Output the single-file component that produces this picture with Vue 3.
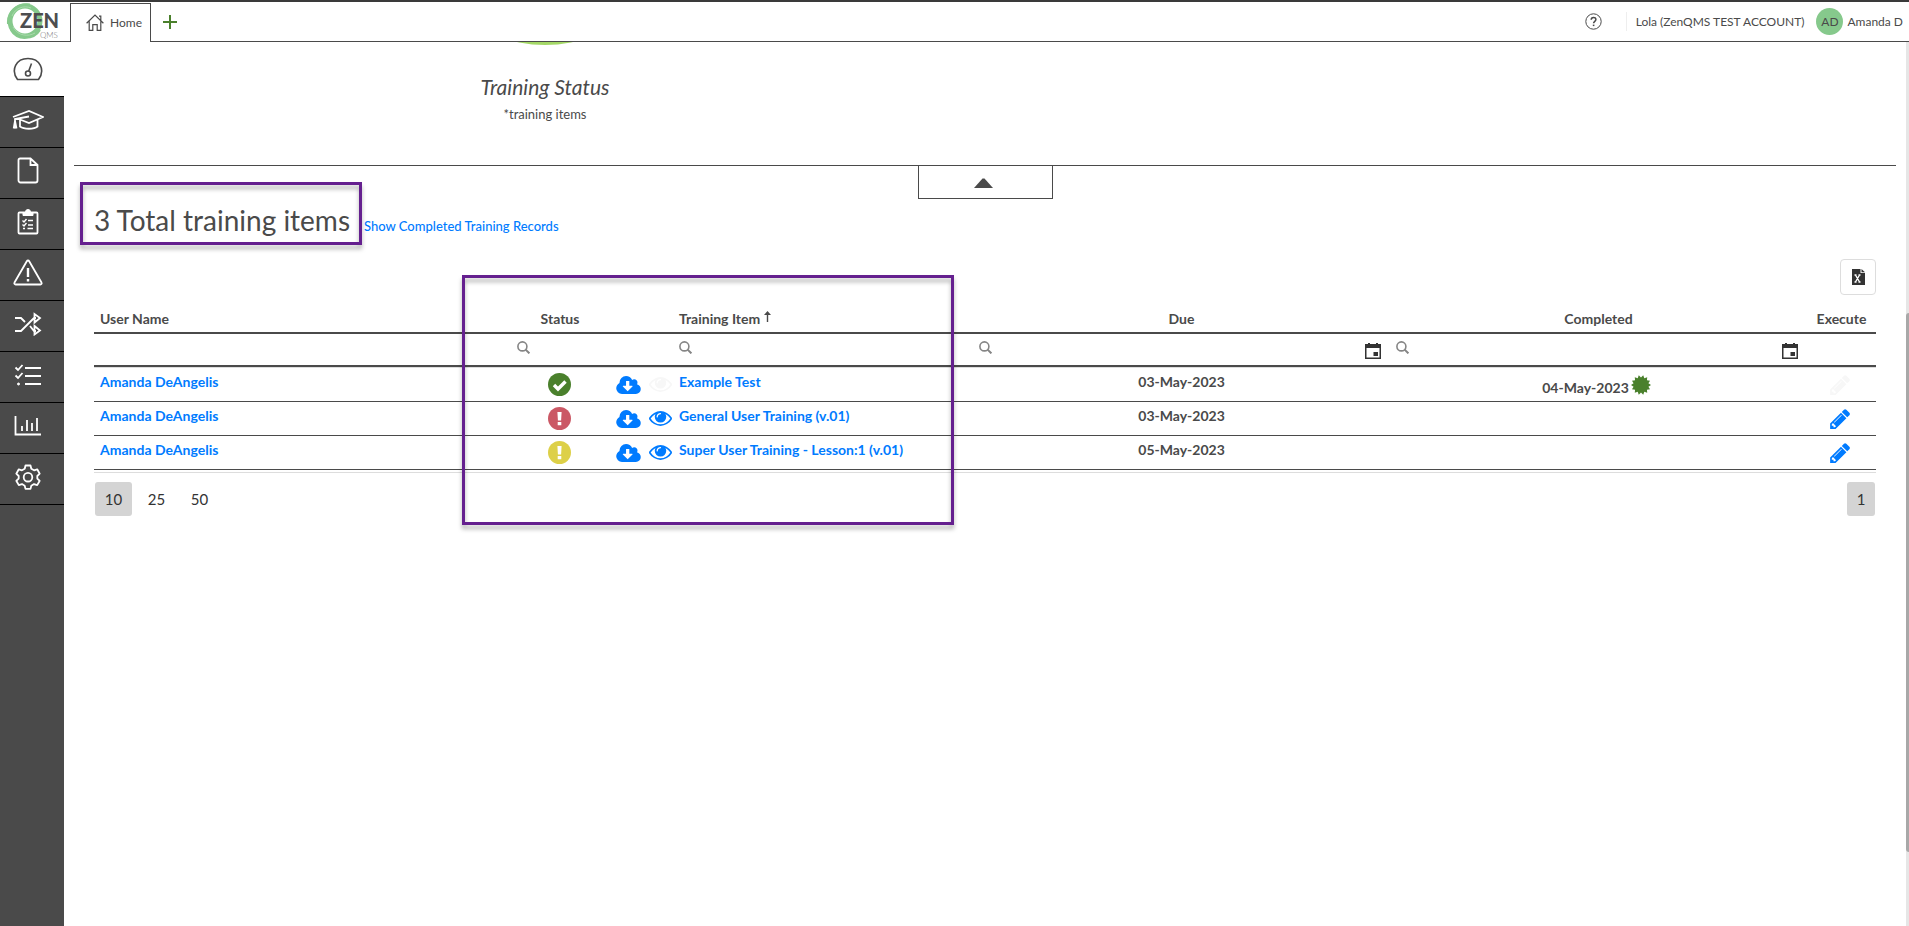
<script setup>
import { ref } from 'vue'

const nav = [
  { id: 'dashboard', label: 'Dashboard' },
  { id: 'training', label: 'Training' },
  { id: 'documents', label: 'Documents' },
  { id: 'audits', label: 'Audits' },
  { id: 'issues', label: 'Issues' },
  { id: 'changes', label: 'Change control' },
  { id: 'tasks', label: 'Tasks' },
  { id: 'reports', label: 'Reports' },
  { id: 'settings', label: 'Settings' },
]
const active = ref('dashboard')

const rows = [
  { user: 'Amanda DeAngelis', status: 'done', item: 'Example Test', due: '03-May-2023', completed: '04-May-2023', open: false },
  { user: 'Amanda DeAngelis', status: 'overdue', item: 'General User Training (v.01)', due: '03-May-2023', completed: '', open: true },
  { user: 'Amanda DeAngelis', status: 'pending', item: 'Super User Training - Lesson:1 (v.01)', due: '05-May-2023', completed: '', open: true },
]
const filters = ref({ status: '', item: '', due: '', completed: '' })
const sizes = [10, 25, 50]
const pageSize = ref(10)

const spikes = 14
const sealPoints = Array.from({ length: spikes * 2 }, (_, i) => {
  const r = i % 2 ? 7.6 : 10
  const a = (Math.PI * i) / spikes + Math.PI / spikes
  return `${(10 + r * Math.sin(a)).toFixed(2)},${(10 - r * Math.cos(a)).toFixed(2)}`
}).join(' ')
</script>

<template>
  <div class="app">
    <header class="topbar">
      <a class="logo" href="#" aria-label="ZEN QMS">
        <svg width="56" height="38" viewBox="0 0 56 38">
          <circle cx="19" cy="18" r="15" fill="none" stroke="#86c98c" stroke-width="5" />
          <path d="M2 21C1 8 12 0 24 1.500M5 27C11 38 28 37 34 27" fill="none" stroke="#86c98c" stroke-width="2" />
          <path d="M6 13C9 5 18 2 25 5M7 24C12 33 22 34 29 30" fill="none" stroke="#a9dbab" stroke-width="1" />
          <text x="14" y="25" class="logo-zen">ZEN</text>
          <text x="34" y="35" class="logo-qms">QMS</text>
        </svg>
      </a>
      <nav class="tabs" aria-label="Tabs">
        <a class="tab" href="#">
          <svg width="18" height="17" viewBox="0 0 18 17" fill="none" stroke="#4a4a4a" stroke-width="1.200">
            <path d="M.6 9.200 9 1l8.400 8.200M3.200 7v9.300h3.600v-5.600h4.400v5.600h3.600V7M13 2.200h1.800v4" />
          </svg>
          Home
        </a>
        <button class="add" aria-label="Add tab">
          <svg width="14" height="14" viewBox="0 0 14 14" stroke="#4a802c" stroke-width="2"><path d="M7 0v14M0 7h14" /></svg>
        </button>
      </nav>
      <div class="account">
        <button class="help" aria-label="Help">
          <svg width="17" height="17" viewBox="0 0 17 17" fill="none" stroke="#4a4a4a">
            <circle cx="8.500" cy="8.500" r="7.700" />
            <path d="M6.200 6.700c0-3 4.700-3 4.700-.2 0 1.800-2.300 1.800-2.300 3.700" stroke-width="1.500" />
            <path d="M8.600 11.600v1.500" stroke-width="1.600" />
          </svg>
        </button>
        <span class="org">Lola (ZenQMS TEST ACCOUNT)</span>
        <span class="avatar">AD</span>
        <span class="me">Amanda D</span>
      </div>
    </header>

    <div class="body">
      <aside class="side">
        <button v-for="n in nav" :key="n.id" class="side-item" :class="{ active: active === n.id }" :aria-label="n.label" @click="active = n.id">
          <svg v-if="n.id === 'dashboard'" width="30" height="24" viewBox="0 0 30 24">
            <path d="M4.500 22.500C-2.500 13 3 1.500 15 1.500S32.500 13 25.500 22.500Z" />
            <circle cx="15" cy="16.500" r="2.500" /><path d="M15.700 14 18.500 6.500" />
          </svg>
          <svg v-else-if="n.id === 'training'" width="32" height="20" viewBox="0 0 32 20">
            <path d="M1 7 17 1l14 6-14 6-9-3.500M17 6.500 3 9v9.500M1.700 18.500 3 11l1.500 7.500M8 10v6.500c4 3 14 3 17.500 0V10" />
          </svg>
          <svg v-else-if="n.id === 'documents'" width="22" height="27" viewBox="0 0 22 27">
            <path d="M3 1.500h10.500L20.500 8v15.500a2 2 0 0 1-2 2H3.500a2 2 0 0 1-2-2V3a1.500 1.500 0 0 1 1.500-1.500ZM13.500 1.500V8h7" />
          </svg>
          <svg v-else-if="n.id === 'audits'" width="22" height="27" viewBox="0 0 22 27">
            <path d="M6 4.500H2.500a1 1 0 0 0-1 1v19a1 1 0 0 0 1 1h17a1 1 0 0 0 1-1v-19a1 1 0 0 0-1-1H16" />
            <path d="M6 4h2.500a2.500 2.500 0 0 1 5 0H16v3.500H6Z" fill="#fff" stroke-width="1" />
            <path d="m5.500 12.500 1.500 1.500 2.500-3M11 12.500h5M5.500 16.500 7 18l2.500-3M11 17h5M6 20.500h2M10.500 20.500h5.500" stroke-width="1.400" />
          </svg>
          <svg v-else-if="n.id === 'issues'" width="30" height="27" viewBox="0 0 30 27">
            <path d="M13.800 2.200a1.400 1.400 0 0 1 2.400 0l12.300 21.300a1.300 1.300 0 0 1-1.200 2H2.700a1.300 1.300 0 0 1-1.200-2Z" />
            <path d="M15 9v9M15 20v2.500" stroke-width="2.400" />
          </svg>
          <svg v-else-if="n.id === 'changes'" width="28" height="24" viewBox="0 0 28 24">
            <path d="M1 6h6l4 4M16 14l4 5h2M1 19h6L20 6h2M20.500 2v8.500L26 6ZM20.500 14v8.500L26 18.500Z" />
          </svg>
          <svg v-else-if="n.id === 'tasks'" width="28" height="22" viewBox="0 0 28 22">
            <path d="m1.500 3.500 2.500 2.500L8.500 1M11 4h16M1.500 11.500 4 14l4.500-5M11 12h16M11 20h16" />
            <circle cx="4.500" cy="20" r="1" fill="#fff" stroke-width="1" />
          </svg>
          <svg v-else-if="n.id === 'reports'" width="28" height="20" viewBox="0 0 28 20">
            <path d="M1.500 0v18.500H27M8 10v5M13 4v11M18 7v8M23 2v13" />
          </svg>
          <svg v-else width="26" height="26" viewBox="0 0 26 26">
            <path d="M10.500 1.500h5l.8 3.300 2.700 1.500 3.200-1 2.500 4.400-2.400 2.300v2.500l2.400 2.300-2.500 4.300-3.200-1-2.700 1.600-.8 3.200h-5l-.8-3.200L7 20.100l-3.200 1-2.500-4.300 2.400-2.300V12L1.300 9.700l2.500-4.400 3.200 1 2.700-1.500Z" stroke-linejoin="round" />
            <circle cx="13" cy="13.200" r="4.300" />
          </svg>
        </button>
      </aside>

      <main class="main">
        <section class="chart">
          <figure class="donut">
            <div class="ring"></div>
            <figcaption>
              <h2>Training Status</h2>
              <p>*training items</p>
            </figcaption>
          </figure>
        </section>

        <section class="panel">
          <button class="collapse" aria-label="Collapse chart">
            <svg width="19" height="10" viewBox="0 0 19 10"><path d="M0 10 8.500.5h2L19 10Z" fill="#4a4a4a" /></svg>
          </button>

          <div class="headline">
            <h1>3 Total training items<span class="callout callout-title"></span></h1>
            <a href="#">Show Completed Training Records</a>
          </div>

          <div class="grid-wrap">
            <div class="tools">
              <button class="export" aria-label="Export to Excel">
                <svg width="13" height="16" viewBox="0 0 13 16">
                  <path d="M0 0h8.500v4H13v12H0Z" fill="#333" /><path d="M9.500 0 13 3.300H9.500Z" fill="#333" />
                  <path d="m3.500 6 4 7M7.500 6l-4 7M2.500 6h2M6.500 6h2M2.500 13h2M6.500 13h2" stroke="#fff" stroke-width="1.400" />
                </svg>
              </button>
            </div>

            <table class="grid">
              <colgroup>
                <col class="c-wide" /><col class="c-status" /><col class="c-icons" /><col /><col class="c-wide" /><col class="c-wide" /><col class="c-exec" />
              </colgroup>
              <thead>
                <tr class="head">
                  <th class="left">User Name</th>
                  <th>Status</th>
                  <th></th>
                  <th class="left">
                    Training Item
                    <svg width="7" height="11" viewBox="0 0 7 11"><path d="M3.500 0 7 4H4.200v7H2.800V4H0Z" fill="#4a4a4a" /></svg>
                  </th>
                  <th>Due</th>
                  <th>Completed</th>
                  <th>Execute</th>
                </tr>
                <tr class="filter">
                  <td></td>
                  <template v-for="f in ['status', '', 'item', 'due', 'completed']" :key="f">
                    <td>
                      <label v-if="f" class="search">
                        <svg width="13" height="13" viewBox="0 0 13 13" fill="none" stroke="#858585" stroke-width="1.600"><circle cx="5.400" cy="5.400" r="4.500" /><path d="m8.600 8.600 3.800 3.800" stroke-width="2" /></svg>
                        <input v-model="filters[f]" type="text" :aria-label="'Filter ' + f" />
                        <button v-if="f === 'due' || f === 'completed'" :aria-label="'Pick ' + f + ' date'">
                          <svg width="16" height="16" viewBox="0 0 16 16"><path d="M0 1h3V0h2v1h6V0h2v1h3v15H0ZM1.500 5v9.500h13V5ZM8.500 9H13v4H8.500Z" fill="#333" fill-rule="evenodd" /></svg>
                        </button>
                      </label>
                    </td>
                  </template>
                  <td></td>
                </tr>
              </thead>
              <tbody>
                <tr v-for="r in rows" :key="r.item">
                  <td><a href="#">{{ r.user }}</a></td>
                  <td class="center">
                    <svg class="status" :class="r.status" width="23" height="23" viewBox="0 0 23 23">
                      <circle cx="11.500" cy="11.500" r="11.500" />
                      <path v-if="r.status === 'done'" d="m6 12 4 4 7.500-7.500" fill="none" stroke="#fff" stroke-width="3.400" />
                      <path v-else d="M9.400 5h4.200l-.5 8.500H9.900ZM9.700 15h3.600v3.200H9.700Z" fill="#fff" />
                    </svg>
                  </td>
                  <td>
                    <div class="actions">
                      <button aria-label="Download">
                        <svg width="25" height="18" viewBox="0 128 1920 1408">
                          <path fill="#007bff" d="M1280 928q0-14-9-23t-23-9h-224V544q0-13-9.500-22.500T992 512H800q-13 0-22.500 9.500T768 544v352H544q-13 0-22.500 9.500T512 928q0 14 9 23l352 352q9 9 23 9t23-9l351-351q10-12 10-24zm640 224q0 159-112.500 271.500T1536 1536H448q-185 0-316.500-131.500T0 1088q0-130 70-240t188-165q-2-30-2-43 0-212 150-362t362-150q156 0 285.500 87T1242 446q71-62 166-62 106 0 181 75t75 181q0 76-41 138 130 31 213.500 135.500T1920 1152z" />
                        </svg>
                      </button>
                      <button aria-label="View" :disabled="!r.open">
                        <svg width="23" height="15" viewBox="0 384 1792 1152">
                          <path :fill="r.open ? '#007bff' : '#f7f7f7'" d="M1664 960q-152-236-381-353 61 104 61 225 0 185-131.500 316.500T896 1280t-316.500-131.500T448 832q0-121 61-225-229 117-381 353 133 205 333.500 326.500T896 1408t434.500-121.500T1664 960zM944 576q0-20-14-34t-34-14q-125 0-214.500 89.500T592 832q0 20 14 34t34 14 34-14 14-34q0-86 61-147t147-61q20 0 34-14t14-34zm848 384q0 34-20 69-140 230-376.500 368.500T896 1536t-499.500-139T20 1029Q0 994 0 960t20-69q140-229 376.500-368T896 384t499.500 139T1772 891q20 35 20 69z" />
                        </svg>
                      </button>
                    </div>
                  </td>
                  <td><a href="#">{{ r.item }}</a></td>
                  <td class="center">{{ r.due }}</td>
                  <td class="center">
                    <span v-if="r.completed" class="completed">
                      {{ r.completed }}
                      <svg width="20" height="20" viewBox="0 0 20 20"><polygon :points="sealPoints" fill="#4a802c" /></svg>
                    </span>
                  </td>
                  <td>
                    <button class="edit" aria-label="Execute" :disabled="!r.open">
                      <svg width="20" height="20" viewBox="0 128 1515 1536">
                        <path :fill="r.open ? '#007bff' : '#f7f7f7'" d="M363 1536l91-91-235-235-91 91v107h128v128h107zm523-928q0-22-22-22-10 0-17 7L305 1135q-7 7-7 17 0 22 22 22 10 0 17-7l542-542q7-7 7-17zm-54-192l416 416-832 832H0v-416zm683 96q0 53-37 90l-166 166-416-416 166-165q36-38 90-38 53 0 91 38l235 234q37 39 37 91z" />
                      </svg>
                    </button>
                  </td>
                </tr>
              </tbody>
            </table>

            <div class="pager">
              <div class="sizes">
                <button v-for="s in sizes" :key="s" :class="{ on: pageSize === s }" @click="pageSize = s">{{ s }}</button>
              </div>
              <button class="on page">1</button>
            </div>
            <span class="callout callout-table"></span>
          </div>
        </section>
        <div class="scroll"><div class="thumb"></div></div>
      </main>
    </div>
  </div>
</template>

<style>
body {
  background: #fff;
}
</style>

<style scoped>
.app {
  display: flex;
  flex-direction: column;
  min-height: 100vh;
  font-family: Lato, "Liberation Sans", sans-serif;
  font-size: 14px;
  color: #4a4a4a;
}
.app * {
  box-sizing: border-box;
}
button {
  display: flex;
  align-items: center;
  justify-content: center;
  padding: 0;
  border: 0;
  background: none;
  font: inherit;
  color: inherit;
  cursor: pointer;
}
svg {
  display: block;
  flex: none;
}
a {
  color: #007bff;
  text-decoration: none;
}
h1, h2, p, figure {
  margin: 0;
  font-weight: 400;
}

.topbar {
  display: flex;
  height: 42px;
  border-top: 2px solid #3a3a3a;
  font-size: 12px;
}
.logo {
  width: 70px;
  padding: 1px 0 0 6px;
  border-bottom: 1px solid #4a4a4a;
}
.logo-zen {
  font-size: 20px;
  font-weight: 900;
  fill: #4d4d4f;
}
.logo-qms {
  font-size: 8px;
  font-weight: 300;
  fill: #777;
}
.tabs {
  display: flex;
  flex: 1;
}
.tab {
  display: flex;
  align-items: center;
  gap: 6px;
  width: 81px;
  margin-top: 1px;
  padding: 0 0 1px 15px;
  border: 1px solid #4a4a4a;
  border-bottom: 0;
  color: #4a4a4a;
}
.add {
  flex: 1;
  justify-content: flex-start;
  padding-left: 12px;
  border-bottom: 1px solid #4a4a4a;
}
.account {
  display: flex;
  align-items: center;
  padding-right: 6px;
  border-bottom: 1px solid #4a4a4a;
}
.help {
  margin-right: 24px;
}
.org {
  padding: 2px 12px 2px 9px;
  border-left: 1px solid #eee;
}
.avatar {
  width: 27px;
  height: 27px;
  margin-right: 4px;
  border-radius: 50%;
  background: #86c98c;
  line-height: 27px;
  text-align: center;
}

.body {
  display: flex;
  flex: 1;
}
.side {
  width: 64px;
  background: #4a4a4a;
}
.side-item {
  width: 100%;
  height: 51px;
  padding: 0 8px 5px 0;
  border-bottom: 1px solid #000;
}
.side-item svg {
  fill: none;
  stroke: #fff;
  stroke-width: 1.8;
}
.side-item.active {
  height: 55px;
  padding-bottom: 0;
  background: #fff;
}
.side-item.active svg {
  stroke: #4a4a4a;
  stroke-width: 1.6;
}

.main {
  position: relative;
  flex: 1;
  overflow: hidden;
  padding: 0 13px 0 10px;
}
.chart {
  display: flow-root;
  height: 123px;
}
.donut {
  display: flow-root;
  width: 51.7%;
  text-align: center;
}
.ring {
  width: 264px;
  height: 264px;
  margin: -261px auto 0;
  border-radius: 50%;
  background: #a4d867;
}
.donut h2 {
  margin-top: 28px;
  font-size: 21px;
  line-height: 28px;
  font-style: italic;
}
.donut p {
  margin-top: 3px;
  font-size: 13px;
  line-height: 20px;
}
.panel {
  border-top: 1px solid #4a4a4a;
}
.collapse {
  width: 135px;
  height: 33px;
  margin: 0 auto;
  padding: 2px 4px 0 0;
  border: 1px solid #4a4a4a;
  border-top: 0;
}
.headline {
  display: flex;
  align-items: baseline;
  gap: 14px;
  padding-left: 20px;
}
.headline h1 {
  position: relative;
  font-size: 28px;
  line-height: 42px;
}
.headline a {
  font-size: 13px;
  font-weight: 500;
}
.callout {
  position: absolute;
  border: 3px solid #65208f;
  filter: drop-shadow(0 4px 2px rgba(0, 0, 0, 0.3));
  pointer-events: none;
}
.callout-title {
  inset: -17px -12px -4px -14px;
}
.callout-table {
  top: 16px;
  left: calc(23.4% - 49px);
  width: 492px;
  height: 250px;
}

.grid-wrap {
  position: relative;
  margin: 18px 20px 0;
}
.tools {
  display: flex;
  justify-content: flex-end;
}
.export {
  width: 36px;
  height: 36px;
  border: 1px solid #ddd;
  border-radius: 4px;
}
.grid {
  width: 100%;
  table-layout: fixed;
  border-collapse: separate;
  border-spacing: 0;
  border-bottom: 1px solid #ddd;
  padding-bottom: 2px;
  font-weight: 700;
}
.c-wide {
  width: 23.4%;
}
.c-status {
  width: 98px;
}
.c-icons {
  width: 64px;
}
.c-exec {
  width: 69px;
}
.grid th,
.grid td {
  padding: 0 6px;
}
.grid .head th {
  height: 39px;
  padding-top: 11px;
  border-bottom: 2px solid #4a4a4a;
  font-weight: 700;
  line-height: 18px;
  white-space: nowrap;
}
.head svg {
  display: inline-block;
  vertical-align: 2px;
}
.grid .left {
  text-align: left;
}
.filter td {
  height: 33px;
  border-bottom: 2px solid #4a4a4a;
}
.search {
  display: flex;
  align-items: flex-start;
}
.search input {
  flex: 1;
  min-width: 0;
  height: 18px;
  border: 0;
  outline: 0;
  padding: 0 4px;
  background: none;
  font: inherit;
}
.search button {
  padding: 2px 3px 0 0;
}
tbody td {
  height: 34px;
  border-bottom: 1px solid #4a4a4a;
  line-height: 28px;
  vertical-align: top;
}
tbody tr:first-child td {
  height: 35px;
  border-top: 1px solid #ddd;
}
.center {
  text-align: center;
}
.status {
  margin: 5px auto 0;
}
.done {
  fill: #4a802c;
}
.overdue {
  fill: #cb5865;
}
.pending {
  fill: #ddd048;
}
.actions {
  display: flex;
  align-items: center;
  gap: 8px;
  height: 33px;
  padding-left: 1px;
}
.completed {
  display: flex;
  justify-content: center;
  gap: 2px;
  height: 33px;
  padding-right: 4px;
  line-height: 40px;
}
.completed svg {
  margin-top: 7px;
}
.edit {
  height: 33px;
  margin: 0 auto;
  padding-right: 4px;
}
.pager {
  display: flex;
  justify-content: space-between;
  padding: 9px 1px 0;
}
.sizes {
  display: flex;
  gap: 6px;
}
.pager button {
  width: 37px;
  height: 34px;
  border-radius: 3px;
  font-size: 15px;
  color: #333;
}
.pager .on {
  background: #d4d4d4;
}
.pager .page {
  width: 28px;
}
.scroll {
  position: absolute;
  top: 0;
  right: 0;
  bottom: 0;
  width: 3px;
  background: #e6e6e6;
}
.thumb {
  height: 61%;
  margin-top: 271px;
  border-radius: 3px 0 0 3px;
  background: #a8a8a8;
}
</style>
